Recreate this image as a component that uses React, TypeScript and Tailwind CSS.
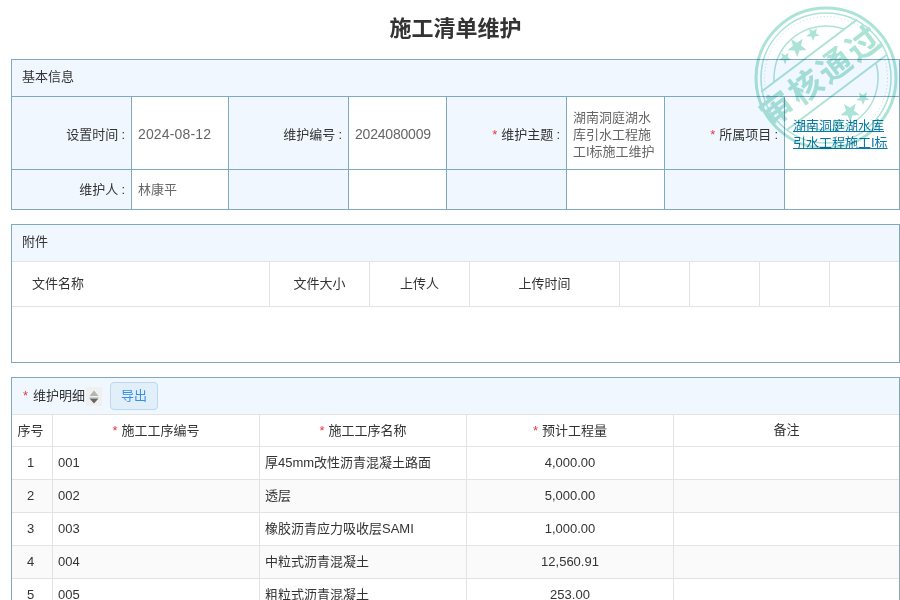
const Star = () => <span className="text-[#e5383b] mr-1">*</span>;
const Colon = () => <span className="ml-[3px]">:</span>;

const cellLabel = "border-r border-[#7fa8c4] bg-[#f0f7ff] text-right pr-[6px] text-[#333]";
const cellValue = "border-r border-[#7fa8c4] pl-[6px] pr-[6px] text-[#666]";

const files = ["文件大小", "上传人", "上传时间", "", "", "", ""];

const rows = [
  ["1", "001", "厚45mm改性沥青混凝土路面", "4,000.00"],
  ["2", "002", "透层", "5,000.00"],
  ["3", "003", "橡胶沥青应力吸收层SAMI", "1,000.00"],
  ["4", "004", "中粒式沥青混凝土", "12,560.91"],
  ["5", "005", "粗粒式沥青混凝土", "253.00"],
];

const starAt = (x: number, y: number, r: number) => {
  const pts: string[] = [];
  for (let i = 0; i < 10; i++) {
    const rad = i % 2 === 0 ? r : r * 0.42;
    const a = ((-90 - 37 + i * 36) * Math.PI) / 180;
    pts.push(`${(x + rad * Math.cos(a)).toFixed(1)},${(y + rad * Math.sin(a)).toFixed(1)}`);
  }
  return pts.join(" ");
};

const Stamp = () => (
  <svg
    viewBox="0 0 150 160"
    className="absolute top-0 left-[750px] w-[150px] h-[160px] pointer-events-none mix-blend-multiply"
  >
    <defs>
      <clipPath id="outsideBand">
        <rect x="-80" y="-80" width="160" height="52" />
        <rect x="-80" y="18" width="160" height="62" />
      </clipPath>
    </defs>
    <g fill="none" stroke="#abe3d6">
      <circle cx="76" cy="78" r="70" strokeWidth="3" />
      <circle cx="76" cy="78" r="65" strokeWidth="1.5" />
      <circle cx="76" cy="78" r="61.5" strokeWidth="1" strokeDasharray="1 2.5" />
    </g>
    <g transform="translate(76 78) rotate(-37)">
      <circle r="52" fill="none" stroke="#abe3d6" strokeWidth="1.5" clipPath="url(#outsideBand)" />
      <line x1="-60" y1="-28" x2="60" y2="-28" stroke="#abe3d6" strokeWidth="2" />
      <line x1="-63" y1="18" x2="63" y2="18" stroke="#abe3d6" strokeWidth="2" />
      <text
        x="-2"
        y="7"
        textAnchor="middle"
        className="fill-[#abe3d6] font-bold text-[33px] tracking-[3px] font-['Noto_Sans_CJK_SC',sans-serif]"
      >
        审核通过
      </text>
    </g>
    <g fill="#abe3d6">
      <polygon points={starAt(47, 47, 10)} />
      <polygon points={starAt(63, 34, 7)} />
      <polygon points={starAt(35, 58, 6.5)} />
      <polygon points={starAt(100, 112, 10)} />
      <polygon points={starAt(113, 98, 7)} />
      <polygon points={starAt(88, 124, 6.5)} />
    </g>
  </svg>
);

const SortIcon = () => (
  <span className="inline-flex w-4 h-[19px] bg-[#f0f0f0] ml-px">
    <svg viewBox="0 0 16 19" className="w-4 h-[19px]">
      <path d="M3.5 9 L8 3.5 L12.5 9 Z" fill="#b5b5b5" />
      <path d="M3.5 10.5 H12.5" stroke="#cfcfcf" strokeWidth="1" />
      <path d="M3.5 11.5 L8 16.5 L12.5 11.5 Z" fill="#666" />
    </svg>
  </span>
);

export default function App() {
  return (
    <div className="relative h-screen overflow-hidden bg-white pl-[11px] text-[13px] text-[#333] font-['Liberation_Sans','Noto_Sans_CJK_SC',sans-serif]">
      <h1 className="h-[59px] leading-[57px] text-center text-[22px] font-bold text-[#333]">施工清单维护</h1>

      <section className="w-[889px] border border-[#7fa8c4]">
        <div className="h-[37px] leading-[34px] pl-[10px] bg-[#f0f7ff] border-b border-[#7fa8c4]">基本信息</div>
        <table className="w-full table-fixed border-separate border-spacing-0">
          <colgroup>
            <col className="w-[120px]" />
            <col className="w-[97px]" />
            <col className="w-[120px]" />
            <col className="w-[98px]" />
            <col className="w-[120px]" />
            <col className="w-[98px]" />
            <col className="w-[120px]" />
            <col />
          </colgroup>
          <tbody>
            <tr className="h-[73px]">
              <td className={`${cellLabel} border-b pt-1`}>设置时间<Colon /></td>
              <td className={`${cellValue} border-b pt-[2px] text-[14px] tracking-[0.15px]`}>2024-08-12</td>
              <td className={`${cellLabel} border-b pt-1`}>维护编号<Colon /></td>
              <td className={`${cellValue} border-b pt-[2px] text-[14px] tracking-[-0.2px]`}>2024080009</td>
              <td className={`${cellLabel} border-b pt-1`}><Star />维护主题<Colon /></td>
              <td className={`${cellValue} border-b pt-[2px] leading-[17px]`}>湖南洞庭湖水库引水工程施工I标施工维护</td>
              <td className={`${cellLabel} border-b pt-1`}><Star />所属项目<Colon /></td>
              <td className="border-b border-[#7fa8c4] pl-2 pr-1 pt-[2px] leading-[17px]">
                <a className="text-[#0a78a8] underline">湖南洞庭湖水库引水工程施工I标</a>
              </td>
            </tr>
            <tr className="h-[39px]">
              <td className={cellLabel}>维护人<Colon /></td>
              <td className={cellValue}>林康平</td>
              <td className={cellLabel} />
              <td className={cellValue} />
              <td className={cellLabel} />
              <td className={cellValue} />
              <td className={cellLabel} />
              <td />
            </tr>
          </tbody>
        </table>
      </section>

      <section className="w-[889px] mt-[14px] border border-[#7fa8c4]">
        <div className="h-[37px] leading-[34px] pl-[10px] bg-[#f0f7ff] border-b border-[#e3e3e3]">附件</div>
        <table className="w-full table-fixed border-separate border-spacing-0">
          <colgroup>
            <col className="w-[258px]" />
            <col className="w-[100px]" />
            <col className="w-[100px]" />
            <col className="w-[150px]" />
            <col className="w-[70px]" />
            <col className="w-[70px]" />
            <col className="w-[70px]" />
            <col />
          </colgroup>
          <thead>
            <tr className="h-[45px]">
              <th className="pl-5 text-left font-normal border-r border-b border-[#e3e3e3]">文件名称</th>
              {files.map((f, i) => (
                <th
                  key={i}
                  className={`font-normal border-b border-[#e3e3e3] ${i < files.length - 1 ? "border-r" : ""}`}
                >
                  {f}
                </th>
              ))}
            </tr>
          </thead>
        </table>
        <div className="h-[55px]" />
      </section>

      <section className="w-[889px] mt-[14px] border border-[#7fa8c4]">
        <div className="h-[37px] flex items-center pl-[11px] gap-2 bg-[#f0f7ff] border-b border-[#e3e3e3]">
          <span className="flex items-center">
            <span className="text-[#e5383b] mr-[5px]">*</span>
            维护明细
            <SortIcon />
          </span>
          <button className="w-12 h-7 rounded border border-[#bcd7ee] bg-[#e1effb] text-[#3a8ee6]">导出</button>
        </div>
        <table className="w-full table-fixed border-separate border-spacing-0">
          <colgroup>
            <col className="w-[41px]" />
            <col className="w-[207px]" />
            <col className="w-[207px]" />
            <col className="w-[207px]" />
            <col />
          </colgroup>
          <thead>
            <tr className="h-8">
              <th className="font-normal pr-[3px] border-r border-b border-[#e3e3e3]">序号</th>
              <th className="font-normal border-r border-b border-[#e3e3e3]"><Star />施工工序编号</th>
              <th className="font-normal border-r border-b border-[#e3e3e3]"><Star />施工工序名称</th>
              <th className="font-normal border-r border-b border-[#e3e3e3]"><Star />预计工程量</th>
              <th className="font-normal pb-[2px] border-b border-[#e3e3e3]">备注</th>
            </tr>
          </thead>
          <tbody>
            {rows.map((r, i) => (
              <tr key={r[0]} className={`h-[33px] ${i % 2 === 1 ? "bg-[#fafafa]" : ""}`}>
                <td className="text-center pr-[3px] border-r border-b border-[#e3e3e3]">{r[0]}</td>
                <td className="pl-[5px] border-r border-b border-[#e3e3e3]">{r[1]}</td>
                <td className="pl-[5px] border-r border-b border-[#e3e3e3]">{r[2]}</td>
                <td className="text-center border-r border-b border-[#e3e3e3]">{r[3]}</td>
                <td className="border-b border-[#e3e3e3]" />
              </tr>
            ))}
          </tbody>
        </table>
      </section>

      <Stamp />
    </div>
  );
}
